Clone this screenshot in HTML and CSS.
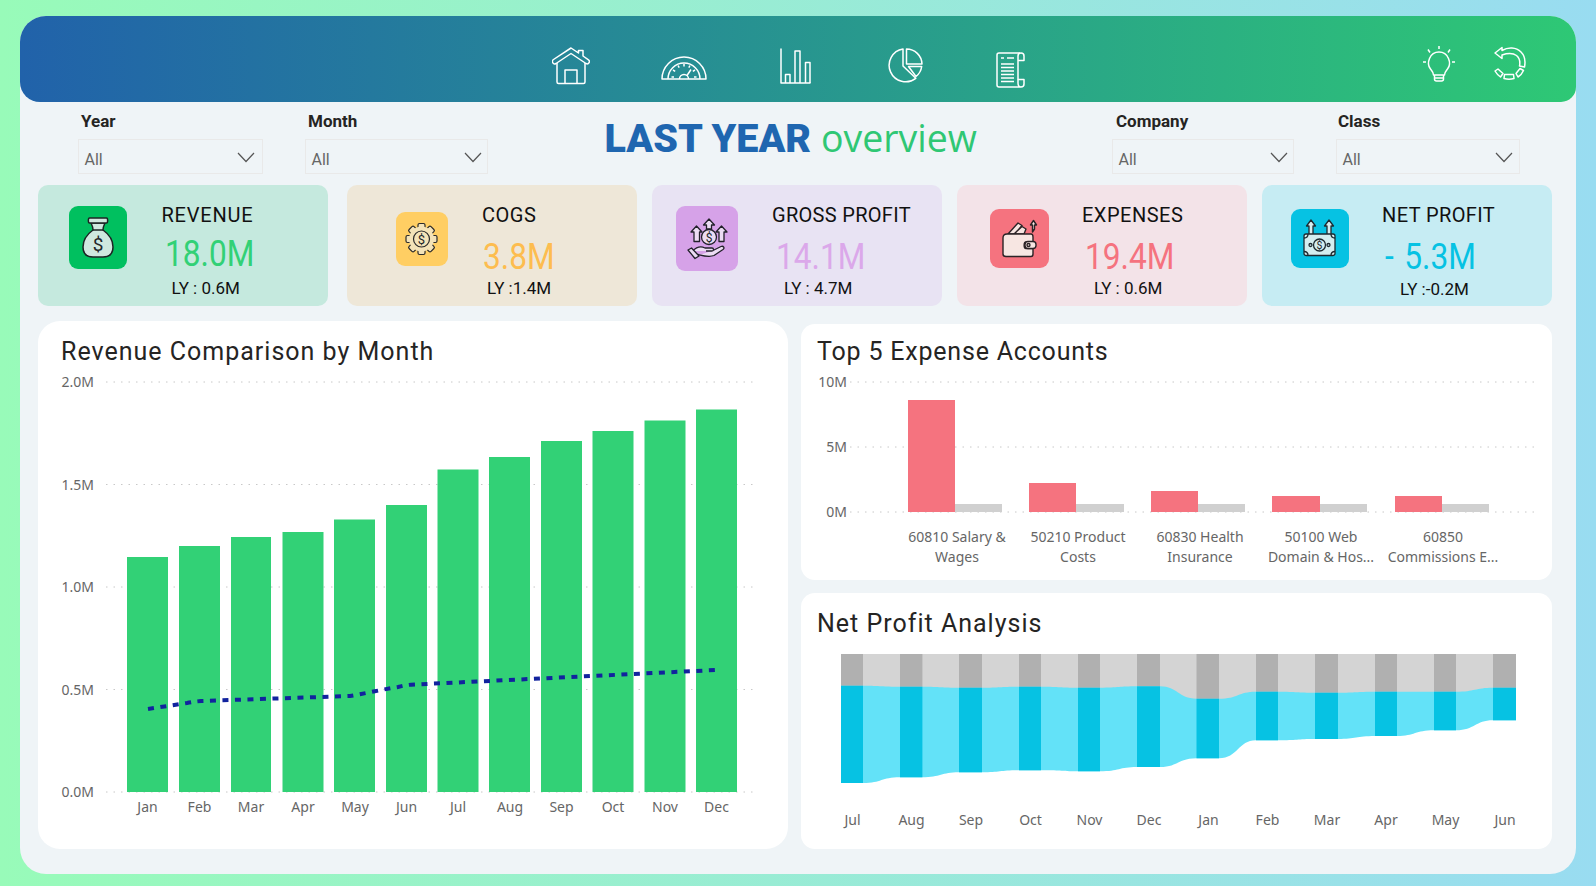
FILE: index.html
```html
<!DOCTYPE html>
<html>
    <head>
        <meta charset="utf-8">
        <title>Last Year overview</title>
        <link rel="stylesheet" href="styles.css">
    </head>

    <body>
        <div class="panel">
            <header class="topbar">
                <nav class="nav-icons">
                    <svg class="line-icon home-icon" width="38" height="38" viewBox="0 0 38 38">
                        <path d="M1.5 16.5 C0 15.5 0 13.5 1.5 12.5 L19 1 L26.5 6 V3.5 H31 V9 L36.5 12.8 C38 14 37.5 16 36 16.7 C35.5 17 35 17 34 16.5 L19 6.5 L4 16.5 C3 17 2 17 1.5 16.5 Z"/>
                        <path d="M5 16 V35 Q5 36.5 6.5 36.5 H31.5 Q33 36.5 33 35 V16"/>
                        <path d="M13 36.5 V23 H25 V36.5"/>
                    </svg>
                    <svg class="line-icon gauge-icon" width="46" height="24" viewBox="0 0 46 24">
                        <path d="M1 23 A22 22 0 0 1 45 23 Z"/>
                        <path d="M7 23 A16 16 0 0 1 39 23"/>
                        <path d="M10.5 21 H13 M12 14 L14.2 15.3 M17 9.5 L18.2 11.6 M23 8 V10.4 M29 9.5 L27.8 11.6 M34 14 L31.8 15.3 M33 21 H35.5"/>
                        <path d="M18.5 23 A4.5 4.5 0 0 1 27.5 23 M26 19.5 L30 13.5"/>
                    </svg>
                    <svg class="line-icon" width="31" height="36" viewBox="0 0 31 36">
                        <path d="M1 0.5 V35 H30.5"/>
                        <path d="M5.5 35 V26.5 H10 V35 M15 35 V3 H20 V35 M25.5 35 V14.5 H30 V35"/>
                    </svg>
                    <svg class="line-icon pie-icon" width="35" height="35" viewBox="0 0 35 35">
                        <path d="M15 1 A16.5 16.5 0 1 0 27.8 30.3 L15 18 Z"/>
                        <path d="M18.5 1 A15.5 15.5 0 0 1 34 16 H18.5 Z"/>
                        <path d="M20.5 18.5 H33.7 A15.5 15.5 0 0 1 28 28.5 Z"/>
                    </svg>
                    <svg class="line-icon doc-icon" width="29" height="36" viewBox="0 0 29 36">
                        <path d="M24 1 H3 Q1 1 1 3 V33 Q1 35 3 35 H25 Q22 35 22 31 V27.5 H28 V32 Q28 35 25 35"/>
                        <path d="M22 27.5 V4 Q22 1 25 1 Q28 1 28 4 V8.5 H22"/>
                        <path d="M5 6 H8 M11 6 H18 M5 12 H18 M5 15.5 H18 M5 19 H18 M5 22.5 H18 M5 26 H18 M5 29.5 H18"/>
                    </svg>
                </nav>
                <div class="action-icons">
                    <svg class="line-icon" width="34" height="37" viewBox="0 0 34 37">
                        <path d="M17 1 V4 M6 4.5 L8 7.5 M28 4.5 L26 7.5 M1 17 H4 M30 17 H33"/>
                        <path d="M11.5 30 C11.5 27 10 26 8.5 24 C4 18.5 7.5 7 17 7 C26.5 7 30 18.5 25.5 24 C24 26 22.5 27 22.5 30 Z"/>
                        <path d="M12.5 30 V34 Q12.5 36 14.5 36 H19.5 Q21.5 36 21.5 34 V30 M12.5 33 H21.5"/>
                    </svg>
                    <svg class="line-icon" width="32" height="35" viewBox="0 0 32 35">
                        <path d="M8 4.5 C14 1 22 1 27 6 C31 10 31.5 16 30.5 21 L25.5 20 C26.5 15 25.5 12 22.5 9.5 C19 7 14 7 8 9 L8 12.5 L1 7 L8 1.5 Z"/>
                        <path d="M1 25 L4 23 L9 27.5 L6.500 31 Q3 28.500 1 25 Z"/>
                        <path d="M10.500 28.500 H19.500 L20 32.500 Q15 34 10 32.500 Z"/>
                        <path d="M22 27.500 L26 22.500 L29.500 24.500 Q27.500 29 24 31 Z"/>
                    </svg>
                </div>
            </header>

            <section class="filters">
                <div class="slicer slicer-year">
                    <label>Year</label>
                    <div class="slicer-box"><span>All</span><svg class="chevron" width="18" height="11" viewBox="0 0 18 11"><path d="M1 1 L9 9.500 L17 1"/></svg></div>
                </div>
                <div class="slicer slicer-month">
                    <label>Month</label>
                    <div class="slicer-box"><span>All</span><svg class="chevron" width="18" height="11" viewBox="0 0 18 11"><path d="M1 1 L9 9.500 L17 1"/></svg></div>
                </div>
                <h1 class="page-title"><b>LAST YEAR</b> <span>overview</span></h1>
                <div class="slicer slicer-company">
                    <label>Company</label>
                    <div class="slicer-box"><span>All</span><svg class="chevron" width="18" height="11" viewBox="0 0 18 11"><path d="M1 1 L9 9.500 L17 1"/></svg></div>
                </div>
                <div class="slicer slicer-class">
                    <label>Class</label>
                    <div class="slicer-box"><span>All</span><svg class="chevron" width="18" height="11" viewBox="0 0 18 11"><path d="M1 1 L9 9.500 L17 1"/></svg></div>
                </div>
            </section>

            <section class="kpis">
                <div class="kpi kpi-revenue">
                    <svg class="kpi-icon" width="58" height="63" viewBox="0 0 58 63">
                        <rect width="58" height="63" rx="9" fill="#00c05f"/>
                        <g fill="#cfe8df" stroke="#1c2424" stroke-width="1.500" stroke-linejoin="round">
                            <path d="M22 17 C23 19 24 21 24 24 C17 29 14 35 14 41 C14 48 18 51 24 51 H34 C40 51 44 48 44 41 C44 35 41 29 34 24 C34 21 35 19 36 17 Z"/>
                            <path d="M20.500 12 H37.500 C39 12 39 17 37.500 17 H20.500 C19 17 19 12 20.500 12 Z"/>
                            <path d="M24 24 H34" fill="none"/>
                        </g>
                        <text x="29" y="45" class="icon-dollar" font-size="19">$</text>
                    </svg>
                    <div class="kpi-text">
                        <div class="kpi-title">REVENUE</div>
                        <div class="kpi-value">18.0M</div>
                        <div class="kpi-ly">LY : 0.6M</div>
                    </div>
                </div>

                <div class="kpi kpi-cogs">
                    <svg class="kpi-icon" width="52" height="54" viewBox="0 0 52 54">
                        <rect width="52" height="54" rx="9" fill="#ffce63"/>
                        <g transform="translate(25.500 27)" fill="#f4e3b8" stroke="#2a2a2a" stroke-width="1.200">
                            <rect x="-3.500" y="-15.500" width="7" height="31" rx="1.500"/>
                            <rect x="-3.500" y="-15.500" width="7" height="31" rx="1.500" transform="rotate(45)"/>
                            <rect x="-3.500" y="-15.500" width="7" height="31" rx="1.500" transform="rotate(90)"/>
                            <rect x="-3.500" y="-15.500" width="7" height="31" rx="1.500" transform="rotate(135)"/>
                            <circle r="12.500" stroke="none"/>
                            <circle r="8"/>
                        </g>
                        <text x="25.500" y="32" class="icon-dollar" font-size="13">$</text>
                    </svg>
                    <div class="kpi-text">
                        <div class="kpi-title">COGS</div>
                        <div class="kpi-value">3.8M</div>
                        <div class="kpi-ly">LY :1.4M</div>
                    </div>
                </div>

                <div class="kpi kpi-gross">
                    <svg class="kpi-icon" width="62" height="65" viewBox="0 0 62 65">
                        <rect width="62" height="65" rx="9" fill="#d6a2e8"/>
                        <g fill="#ecdcf3" stroke="#22202a" stroke-width="1.300" stroke-linejoin="round">
                            <path d="M33 13 L38.500 19 H35.500 V23 H30.500 V19 H27.500 Z"/>
                            <path d="M20.500 20 L26 26 H23.500 V35.500 H18 V26 H15 Z"/>
                            <path d="M45.500 20 L51 26 H48 V35.500 H43 V26 H40 Z"/>
                            <circle cx="33" cy="31" r="7.500"/>
                            <path d="M16.500 45 C21 40.500 25 40 29 42 H36 C38 42 38 45 36 45 H30 M37 44.500 L45 40.500 C47.500 39.500 49 42 47 43.500 L38 49.500 C33 51.500 28 50 22 48.500 L20.500 50"/>
                            <path d="M12 44 L15.500 42 L23 50 L19 52.500 Z"/>
                        </g>
                        <text x="33" y="35.500" class="icon-dollar" font-size="12">$</text>
                    </svg>
                    <div class="kpi-text">
                        <div class="kpi-title">GROSS PROFIT</div>
                        <div class="kpi-value">14.1M</div>
                        <div class="kpi-ly">LY : 4.7M</div>
                    </div>
                </div>

                <div class="kpi kpi-expenses">
                    <svg class="kpi-icon" width="59" height="59" viewBox="0 0 59 59">
                        <rect width="59" height="59" rx="9" fill="#f5737f"/>
                        <g fill="#f7e6e2" stroke="#2b2326" stroke-width="1.400" stroke-linejoin="round">
                            <path d="M18 25 L28 14 L32 16.500 L25 25 Z"/>
                            <path d="M24 25 L32 17.500 L36 20 L34 25 Z"/>
                            <path d="M13 29 Q13 25 17 25 H41 Q43 25 43 28 V33 H36 C33.500 33 33.500 39.500 36 39.500 H43 V45 Q43 47.500 41 47.500 H16 Q13 47.500 13 45 Z"/>
                            <rect x="35" y="32.500" width="11" height="7" rx="3"/>
                            <circle cx="38.500" cy="36" r="1.500"/>
                            <path d="M42.500 23 V16 H40.500 L43.500 11.500 L46.500 16 H44.500 V20 Z"/>
                        </g>
                    </svg>
                    <div class="kpi-text">
                        <div class="kpi-title">EXPENSES</div>
                        <div class="kpi-value">19.4M</div>
                        <div class="kpi-ly">LY : 0.6M</div>
                    </div>
                </div>

                <div class="kpi kpi-net">
                    <svg class="kpi-icon" width="58" height="59" viewBox="0 0 58 59">
                        <rect width="58" height="59" rx="9" fill="#06c2e3"/>
                        <g fill="#d4eef0" stroke="#1e2a30" stroke-width="1.300" stroke-linejoin="round">
                            <path d="M20 11 L24.500 17 H22 V27 H18 V17 H15.500 Z"/>
                            <path d="M38 11 L42.500 17 H40 V27 H36 V17 H33.500 Z"/>
                            <rect x="13" y="25" width="31" height="21.500" rx="2"/>
                            <path d="M13 29 Q17 29 17 25 M40 25 Q40 29 44 29 M13 42.500 Q17 42.500 17 46.500 M40 46.500 Q40 42.500 44 42.500" fill="none"/>
                            <circle cx="28.500" cy="36" r="6"/>
                            <circle cx="19.500" cy="36" r="1.500"/>
                            <circle cx="37.500" cy="36" r="1.500"/>
                        </g>
                        <text x="28.500" y="39.800" class="icon-dollar" font-size="10.500">$</text>
                    </svg>
                    <div class="kpi-text">
                        <div class="kpi-title">NET PROFIT</div>
                        <div class="kpi-value">- 5.3M</div>
                        <div class="kpi-ly">LY :-0.2M</div>
                    </div>
                </div>
            </section>

            <section class="charts">
                <div class="card card-revenue">
                    <h2>Revenue Comparison by Month</h2>
                    <svg class="chart" width="750" height="481" viewBox="38 368 750 481">
                        <g class="grid">
                            <path d="M106 382 H758 M106 484.500 H758 M106 587 H758 M106 689.500 H758 M106 792 H758"/>
                        </g>
                        <g class="axis-y">
                            <text x="94" y="387">2.0M</text>
                            <text x="94" y="489.500">1.5M</text>
                            <text x="94" y="592">1.0M</text>
                            <text x="94" y="694.500">0.5M</text>
                            <text x="94" y="797">0.0M</text>
                        </g>
                        <g fill="#32d176">
                            <rect x="127" y="557" width="41" height="235"/>
                            <rect x="179" y="546" width="41" height="246"/>
                            <rect x="231" y="537" width="40" height="255"/>
                            <rect x="282.500" y="532" width="41" height="260"/>
                            <rect x="334" y="519.500" width="41" height="272.500"/>
                            <rect x="386" y="505" width="41" height="287"/>
                            <rect x="437.500" y="469.500" width="41" height="322.500"/>
                            <rect x="489" y="457" width="41" height="335"/>
                            <rect x="541" y="441" width="41" height="351"/>
                            <rect x="592.500" y="431" width="41" height="361"/>
                            <rect x="644.500" y="420.500" width="41" height="371.500"/>
                            <rect x="696" y="409.500" width="41" height="382.500"/>
                        </g>
                        <path class="ly-line" d="M148 709 L187 703 C192 702 196 701.500 201 701 L350 696 C362 694 385 689 398 687 C402 686 406 685 411 684.700 L716 670"/>
                        <g class="axis-x">
                            <text x="147.500" y="812">Jan</text>
                            <text x="199.500" y="812">Feb</text>
                            <text x="251" y="812">Mar</text>
                            <text x="303" y="812">Apr</text>
                            <text x="355" y="812">May</text>
                            <text x="406.500" y="812">Jun</text>
                            <text x="458" y="812">Jul</text>
                            <text x="510" y="812">Aug</text>
                            <text x="561.500" y="812">Sep</text>
                            <text x="613" y="812">Oct</text>
                            <text x="665" y="812">Nov</text>
                            <text x="716.500" y="812">Dec</text>
                        </g>
                    </svg>
                </div>

                <div class="right-column">
                    <div class="card card-expense">
                        <h2>Top 5 Expense Accounts</h2>
                        <svg class="chart" width="751" height="212" viewBox="801 368 751 212">
                            <g class="grid">
                                <path d="M850 382 H1537 M850 447 H1537 M850 512 H1537"/>
                            </g>
                            <g class="axis-y">
                                <text x="847" y="387">10M</text>
                                <text x="847" y="452">5M</text>
                                <text x="847" y="517">0M</text>
                            </g>
                            <g fill="#f5737f">
                                <rect x="908" y="400" width="47" height="112"/>
                                <rect x="1029" y="483" width="47" height="29"/>
                                <rect x="1151" y="491" width="47" height="21"/>
                                <rect x="1272" y="496" width="48" height="16"/>
                                <rect x="1395" y="496" width="47" height="16"/>
                            </g>
                            <g fill="#d0d0d0">
                                <rect x="955" y="504" width="47" height="8"/>
                                <rect x="1076" y="504" width="48" height="8"/>
                                <rect x="1198" y="504" width="47" height="8"/>
                                <rect x="1320" y="504" width="47" height="8"/>
                                <rect x="1442" y="504" width="47" height="8"/>
                            </g>
                            <g class="axis-x">
                                <text x="957" y="542">60810 Salary &amp;</text>
                                <text x="957" y="562">Wages</text>
                                <text x="1078" y="542">50210 Product</text>
                                <text x="1078" y="562">Costs</text>
                                <text x="1200" y="542">60830 Health</text>
                                <text x="1200" y="562">Insurance</text>
                                <text x="1321" y="542">50100 Web</text>
                                <text x="1321" y="562">Domain &amp; Hos...</text>
                                <text x="1443" y="542">60850</text>
                                <text x="1443" y="562">Commissions E...</text>
                            </g>
                        </svg>
                    </div>

                    <div class="card card-net">
                        <h2>Net Profit Analysis</h2>
                        <svg class="chart" width="751" height="209" viewBox="801 640 751 209">
                            <rect x="841" y="654" width="675" height="46" fill="#d4d4d4"/>
                            <path fill="#63e2f8" d="M841 685.700 H863 C881 685.700 882 686.700 900 686.700 H922 C941 686.700 941 687.700 959 687.700 H982 C1000 687.700 1000 686.700 1019 686.700 H1041 C1060 686.700 1060 687.700 1078 687.700 H1100 C1119 687.700 1119 686.300 1137 686.300 H1160 C1178 686.300 1178 698.700 1196.500 698.700 H1219 C1238 698.700 1238 691.700 1256 691.700 H1278 C1297 691.700 1297 692.700 1315 692.700 H1338 C1356 692.700 1356 691.700 1375 691.700 H1397 C1415 691.700 1415 691.700 1434 691.700 H1456 C1475 691.700 1475 687.700 1493 687.700 H1516 V720.300 H1493 C1475 720.300 1475 730.300 1456 730.300 H1434 C1415 730.300 1415 736 1397 736 H1375 C1356 736 1356 739 1338 739 H1315 C1297 739 1297 740.300 1278 740.300 H1256 C1238 740.300 1238 758.300 1219 758.300 H1196.500 C1178 758.300 1178 767 1160 767 H1137 C1119 767 1119 771.300 1100 771.300 H1078 C1060 771.300 1060 770.300 1041 770.300 H1019 C1000 770.300 1000 772.300 982 772.300 H959 C941 772.300 941 777.300 922 777.300 H900 C881 777.300 882 783 863 783 H841 Z"/>
                            <g fill="#b0b0b0">
                                <rect x="841" y="654" width="22" height="31.700"/>
                                <rect x="900" y="654" width="22.400" height="32.700"/>
                                <rect x="959" y="654" width="23" height="33.700"/>
                                <rect x="1019" y="654" width="22" height="32.700"/>
                                <rect x="1078" y="654" width="22" height="33.700"/>
                                <rect x="1137" y="654" width="23" height="32.300"/>
                                <rect x="1196.500" y="654" width="22.500" height="44.700"/>
                                <rect x="1256" y="654" width="22" height="37.700"/>
                                <rect x="1315" y="654" width="23" height="38.700"/>
                                <rect x="1375" y="654" width="22" height="37.700"/>
                                <rect x="1434" y="654" width="22" height="37.700"/>
                                <rect x="1493" y="654" width="23" height="33.700"/>
                            </g>
                            <g fill="#06c2e3">
                                <rect x="841" y="685.700" width="22" height="97.300"/>
                                <rect x="900" y="686.700" width="22.400" height="90.600"/>
                                <rect x="959" y="687.700" width="23" height="84.600"/>
                                <rect x="1019" y="686.700" width="22" height="83.600"/>
                                <rect x="1078" y="687.700" width="22" height="83.600"/>
                                <rect x="1137" y="686.300" width="23" height="80.700"/>
                                <rect x="1196.500" y="698.700" width="22.500" height="59.600"/>
                                <rect x="1256" y="691.700" width="22" height="48.600"/>
                                <rect x="1315" y="692.700" width="23" height="46.300"/>
                                <rect x="1375" y="691.700" width="22" height="44.300"/>
                                <rect x="1434" y="691.700" width="22" height="38.600"/>
                                <rect x="1493" y="687.700" width="23" height="32.600"/>
                            </g>
                            <g class="axis-x">
                                <text x="852.500" y="825">Jul</text>
                                <text x="911.500" y="825">Aug</text>
                                <text x="971" y="825">Sep</text>
                                <text x="1030.500" y="825">Oct</text>
                                <text x="1089.500" y="825">Nov</text>
                                <text x="1149" y="825">Dec</text>
                                <text x="1208.500" y="825">Jan</text>
                                <text x="1267.500" y="825">Feb</text>
                                <text x="1327" y="825">Mar</text>
                                <text x="1386" y="825">Apr</text>
                                <text x="1445.500" y="825">May</text>
                                <text x="1505" y="825">Jun</text>
                            </g>
                        </svg>
                    </div>
                </div>
            </section>
        </div>
    </body>
</html>
```

FILE: styles.css
```css
* {
    box-sizing: border-box;
}

html, body {
    height: 100%;
}

body {
    margin: 0;
    padding: 16px 20px 12px 19.5px;
    overflow: hidden;
    background: linear-gradient(90deg, #98fbb9, #99dcf1);
    font-family: Roboto, "Liberation Sans", sans-serif;
}

.panel {
    height: 858px;
    background-color: #eff4f7;
    border-radius: 26px;
}

/* top bar */
.topbar {
    height: 86px;
    display: flex;
    justify-content: space-between;
    align-items: center;
    padding: 0 50px 0 532px;
    background: linear-gradient(90deg, #2162aa, #2ec875);
    border-radius: 26px 26px 15px 20px;
}

.nav-icons {
    display: flex;
    align-items: center;
    gap: 73px;
    margin-top: 13px;
}

.action-icons {
    display: flex;
    align-items: center;
    gap: 38px;
    margin-top: 9px;
}

.line-icon {
    display: block;
    fill: none;
    stroke: #fff;
    stroke-width: 1.5;
    stroke-linejoin: round;
}

.home-icon {
    margin-right: -2px;
}

.gauge-icon {
    margin-top: 4px;
}

.pie-icon {
    margin-left: 4px;
}

.doc-icon {
    margin-top: 8px;
}

/* slicers and title */
.filters {
    height: 83px;
    display: flex;
    padding: 9px 0 0 58px;
}

.slicer label {
    display: block;
    height: 20px;
    line-height: 20px;
    margin: 0 0 8px 3.5px;
    font-size: 17px;
    font-weight: 700;
    color: #252423;
}

.slicer-box {
    height: 35px;
    display: flex;
    justify-content: space-between;
    align-items: center;
    padding: 0 7px 0 6px;
    border: 1px solid #e9e9e9;
    font-size: 16px;
    color: #666;
}

.slicer-box span {
    margin-top: 5px;
}

.chevron {
    margin-top: 2px;
    fill: none;
    stroke: #555;
    stroke-width: 1.2;
}

.slicer-year {
    width: 185px;
}

.slicer-month {
    width: 183px;
    margin-left: 42px;
}

.slicer-month .slicer-box, .slicer-company .slicer-box {
    padding-right: 5px;
}

.slicer-company {
    width: 182px;
}

.slicer-company label {
    margin-left: 4.5px;
}

.slicer-class {
    width: 184px;
    margin-left: 42px;
}

.slicer-class label {
    margin-left: 2.5px;
}

.slicer-class .slicer-box {
    padding-right: 6px;
}

.page-title {
    width: 507px;
    margin: 4px 0 0 117px;
    font-size: 39.5px;
    line-height: 46px;
    font-weight: 700;
    color: #1f66b0;
}

.page-title span {
    font-family: "Open Sans", sans-serif;
    font-weight: 400;
    font-size: 37.5px;
    color: #2fc774;
}

/* kpi cards */
.kpis {
    display: flex;
    gap: 15px;
    padding-left: 18.5px;
}

.kpi {
    width: 290px;
    height: 121px;
    display: flex;
    align-items: flex-start;
    border-radius: 10px;
}

.kpi-icon {
    flex: none;
    display: block;
}

.kpi-title {
    margin-top: 19px;
    font-size: 20px;
    line-height: 22px;
    letter-spacing: 0.5px;
    color: #111;
}

.kpi-value {
    margin-top: 13px;
    font-size: 36px;
    line-height: 36px;
    transform: scaleX(0.88);
    transform-origin: left center;
    white-space: nowrap;
}

.kpi-ly {
    margin-top: 3px;
    font-size: 17px;
    line-height: 20px;
    color: #111;
}

.kpi-revenue {
    margin-right: 4px;
    background-color: #c5e9de;
}
.kpi-revenue .kpi-icon { margin: 21px 35px 0 30.5px; }
.kpi-revenue .kpi-title { letter-spacing: 0.8px; }
.kpi-revenue .kpi-value { margin: 10px 0 0 3px; color: #32d176; }
.kpi-revenue .kpi-ly { margin: 6px 0 0 10px; }

.kpi-cogs {
    background-color: #eee7d8;
}
.kpi-cogs .kpi-icon { margin: 27px 34px 0 49px; }
.kpi-cogs .kpi-value { margin-left: 1px; color: #fdbd4f; }
.kpi-cogs .kpi-ly { margin-left: 5px; }

.kpi-gross {
    background-color: #e8e3f3;
}
.kpi-gross .kpi-icon { margin: 21px 34px 0 24px; }
.kpi-gross .kpi-title { letter-spacing: 0.3px; }
.kpi-gross .kpi-value { margin-left: 4px; color: #dba8ea; }
.kpi-gross .kpi-ly { margin-left: 12px; }

.kpi-expenses {
    background-color: #f3e3e8;
}
.kpi-expenses .kpi-icon { margin: 24px 33px 0 33px; }
.kpi-expenses .kpi-value { margin-left: 3px; color: #f5737f; }
.kpi-expenses .kpi-ly { margin-left: 12px; }

.kpi-net {
    background-color: #c6ecf3;
}
.kpi-net .kpi-icon { margin: 24px 33px 0 29px; }
.kpi-net .kpi-title { letter-spacing: 0.4px; }
.kpi-net .kpi-value { margin-left: 3px; color: #06c2e3; word-spacing: 3px; }
.kpi-net .kpi-ly { margin: 4px 0 0 18px; }

/* chart cards */
.charts {
    display: flex;
    gap: 13px;
    margin-top: 15px;
    padding-left: 18.5px;
}

.right-column {
    display: flex;
    flex-direction: column;
    gap: 13px;
    padding-top: 3px;
}

.card {
    background-color: #fff;
    border-radius: 14px;
    padding-top: 13px;
}

.card h2 {
    height: 34px;
    margin: 0;
    padding: 2px 0 0 16px;
    font-size: 25px;
    line-height: 32px;
    font-weight: 400;
    letter-spacing: 1px;
    color: #252423;
}

.card-revenue {
    width: 750px;
    height: 528px;
    border-radius: 22px;
}

.card-revenue h2 {
    padding-left: 23px;
}

.card-expense {
    width: 751px;
    height: 256px;
    padding-top: 10px;
}

.card-expense h2 {
    letter-spacing: 0.8px;
}

.card-net {
    width: 751px;
    height: 256px;
}

.chart {
    display: block;
}

.grid path {
    fill: none;
    stroke: #c8c8c8;
    stroke-width: 1;
    stroke-dasharray: 1.5 6;
}

.axis-y text, .axis-x text {
    font-family: "Noto Sans", sans-serif;
    font-size: 14px;
    fill: #666;
}

.axis-y text {
    text-anchor: end;
}

.axis-x text {
    text-anchor: middle;
}

.ly-line {
    fill: none;
    stroke: #12239e;
    stroke-width: 4;
    stroke-dasharray: 6 6.51;
}

.icon-dollar {
    font-family: Roboto, sans-serif;
    text-anchor: middle;
    fill: #22262a;
}
```
